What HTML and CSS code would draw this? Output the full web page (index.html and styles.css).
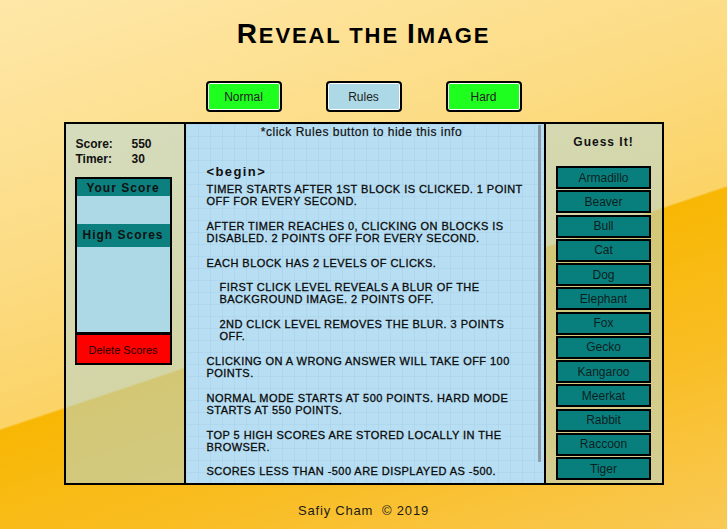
FILE: index.html
```html
<!DOCTYPE html>
<html lang="en">
<head>
<meta charset="utf-8">
<title>Reveal the Image</title>
<link rel="stylesheet" href="styles.css">
</head>
<body>
<h1 class="title"><span class="cap">R</span>eveal the <span class="cap">I</span>mage</h1>

<div class="modes">
  <button class="mode mode-green">Normal</button>
  <button class="mode mode-blue">Rules</button>
  <button class="mode mode-green">Hard</button>
</div>

<main class="game">
  <aside class="panel panel-left">
    <div class="stat"><span class="stat-label">Score:</span>550</div>
    <div class="stat"><span class="stat-label">Timer:</span>30</div>
    <div class="scores">
      <div class="sc-head sc-head-your">Your Score</div>
      <div class="sc-body sc-body-your"></div>
      <div class="sc-head sc-head-high">High Scores</div>
      <div class="sc-body sc-body-high"></div>
    </div>
    <button class="delete">Delete Scores</button>
  </aside>

  <section class="rules">
    <div class="hint">*click Rules button to hide this info</div>
    <div class="begin">&lt;begin&gt;</div>
    <p>TIMER STARTS AFTER 1ST BLOCK IS CLICKED. 1 POINT OFF FOR EVERY SECOND.</p>
    <p>AFTER TIMER REACHES 0, CLICKING ON BLOCKS IS DISABLED. 2 POINTS OFF FOR EVERY SECOND.</p>
    <p>EACH BLOCK HAS 2 LEVELS OF CLICKS.</p>
    <p class="indent">FIRST CLICK LEVEL REVEALS A BLUR OF THE BACKGROUND IMAGE. 2 POINTS OFF.</p>
    <p class="indent">2ND CLICK LEVEL REMOVES THE BLUR. 3 POINTS OFF.</p>
    <p>CLICKING ON A WRONG ANSWER WILL TAKE OFF 100 POINTS.</p>
    <p>NORMAL MODE STARTS AT 500 POINTS. HARD MODE STARTS AT 550 POINTS.</p>
    <p>TOP 5 HIGH SCORES ARE STORED LOCALLY IN THE BROWSER.</p>
    <p>SCORES LESS THAN -500 ARE DISPLAYED AS -500.</p>
    <div class="thumb"></div>
  </section>

  <aside class="panel panel-right">
    <div class="guess">Guess It!</div>
    <div class="answers">
      <button class="answer">Armadillo</button>
      <button class="answer">Beaver</button>
      <button class="answer">Bull</button>
      <button class="answer">Cat</button>
      <button class="answer">Dog</button>
      <button class="answer">Elephant</button>
      <button class="answer">Fox</button>
      <button class="answer">Gecko</button>
      <button class="answer">Kangaroo</button>
      <button class="answer">Meerkat</button>
      <button class="answer">Rabbit</button>
      <button class="answer">Raccoon</button>
      <button class="answer">Tiger</button>
    </div>
  </aside>
</main>

<footer class="footer">Safiy Cham&nbsp; &copy; 2019</footer>
</body>
</html>
```

FILE: styles.css
```css
html {
  height: 100%;
  background: linear-gradient(161.5deg,
    #fee7a8 0%,
    #fcdc84 35%,
    #fbd366 55.5%,
    #f8b704 55.8%,
    #f9bd22 75%,
    #f9c955 100%);
}

body {
  margin: 0;
  font-family: "Liberation Sans", Arial, sans-serif;
  color: #111;
}

button {
  font-family: "Liberation Sans", Arial, sans-serif;
  margin: 0;
  padding: 0;
  cursor: pointer;
}

.title {
  margin: 18px 0 0;
  height: 32px;
  line-height: 32px;
  text-align: center;
  font-size: 22px;
  font-weight: bold;
  text-transform: uppercase;
  letter-spacing: 1.9px;
  color: #000;
}

.title .cap {
  font-size: 28px;
}

.modes {
  display: flex;
  justify-content: center;
  gap: 44px;
  margin-top: 31px;
}

.mode {
  width: 76px;
  height: 31px;
  border: 2px solid #000;
  border-radius: 4px;
  box-shadow: inset 0 0 0 1px #fff;
  font-size: 12px;
  color: #222;
}

.mode-green { background: #1fff1f; }
.mode-blue { background: #add8e6; }

.game {
  display: flex;
  width: 600px;
  height: 363px;
  margin: 10px auto 0;
}

.panel {
  box-sizing: border-box;
  background: rgba(173, 216, 230, 0.5);
  border: 2px solid #000;
}

.panel-left {
  width: 120px;
  border-right: none;
  padding: 13px 0 0 9px;
}

.stat {
  font-size: 12px;
  font-weight: bold;
  line-height: 15px;
  padding-left: 1px;
}

.stat-label {
  display: inline-block;
  width: 56px;
}

.scores {
  margin-top: 10px;
  width: 93px;
  border: 2px solid #000;
  background: #add8e6;
}

.sc-head {
  background: #0b807f;
  font-size: 12px;
  font-weight: bold;
  letter-spacing: 1px;
  text-align: center;
}

.sc-head-your { height: 17px; line-height: 19px; }
.sc-body-your { height: 28px; }
.sc-head-high { height: 23px; line-height: 23px; }
.sc-body-high { height: 85px; }

.delete {
  display: block;
  box-sizing: border-box;
  width: 97px;
  height: 31px;
  border: 2px solid #000;
  border-top-width: 1px;
  background: #ff0000;
  font-size: 11px;
  color: #1a0000;
  padding-top: 1px;
}

.rules {
  position: relative;
  box-sizing: border-box;
  width: 362px;
  border: 2px solid #000;
  padding: 1px 12px 0 21px;
  overflow: hidden;
  background-color: #b7def2;
  background-image:
    linear-gradient(rgba(90, 140, 175, 0.07) 1px, transparent 1px),
    linear-gradient(90deg, rgba(90, 140, 175, 0.07) 1px, transparent 1px);
  background-size: 12px 12px;
}

.hint {
  margin: 0 -6px 0 -21px;
  font-size: 12px;
  line-height: 14px;
  letter-spacing: 0.5px;
  text-align: center;
  -webkit-text-stroke: 0.2px #111;
}

.begin {
  margin: 25px 0 3px;
  font-size: 13px;
  font-weight: bold;
  line-height: 16px;
  letter-spacing: 1.4px;
}

.rules p {
  margin: 0 0 12.8px;
  font-size: 11px;
  letter-spacing: 0.45px;
  color: #0a0a0a;
  -webkit-text-stroke: 0.3px #0a0a0a;
}

.rules p.indent {
  padding-left: 13px;
}

.thumb {
  position: absolute;
  top: 1px;
  right: 3px;
  width: 3px;
  height: 337px;
  background: #8f9ba5;
  border-radius: 1px;
}

.panel-right {
  width: 118px;
  border-left: none;
  padding-top: 11px;
}

.guess {
  font-size: 12px;
  font-weight: bold;
  line-height: 15px;
  letter-spacing: 1px;
  text-align: center;
}

.answers {
  margin-top: 16px;
  display: flex;
  flex-direction: column;
  align-items: center;
  gap: 1.25px;
}

.answer {
  box-sizing: border-box;
  width: 95px;
  height: 23px;
  border: 2px solid #000;
  background: #087f7d;
  font-size: 12px;
  color: #0c1f1f;
}

.footer {
  margin-top: 18px;
  text-align: center;
  font-size: 13px;
  line-height: 16px;
  letter-spacing: 0.8px;
  color: #1a1a1a;
}
```
